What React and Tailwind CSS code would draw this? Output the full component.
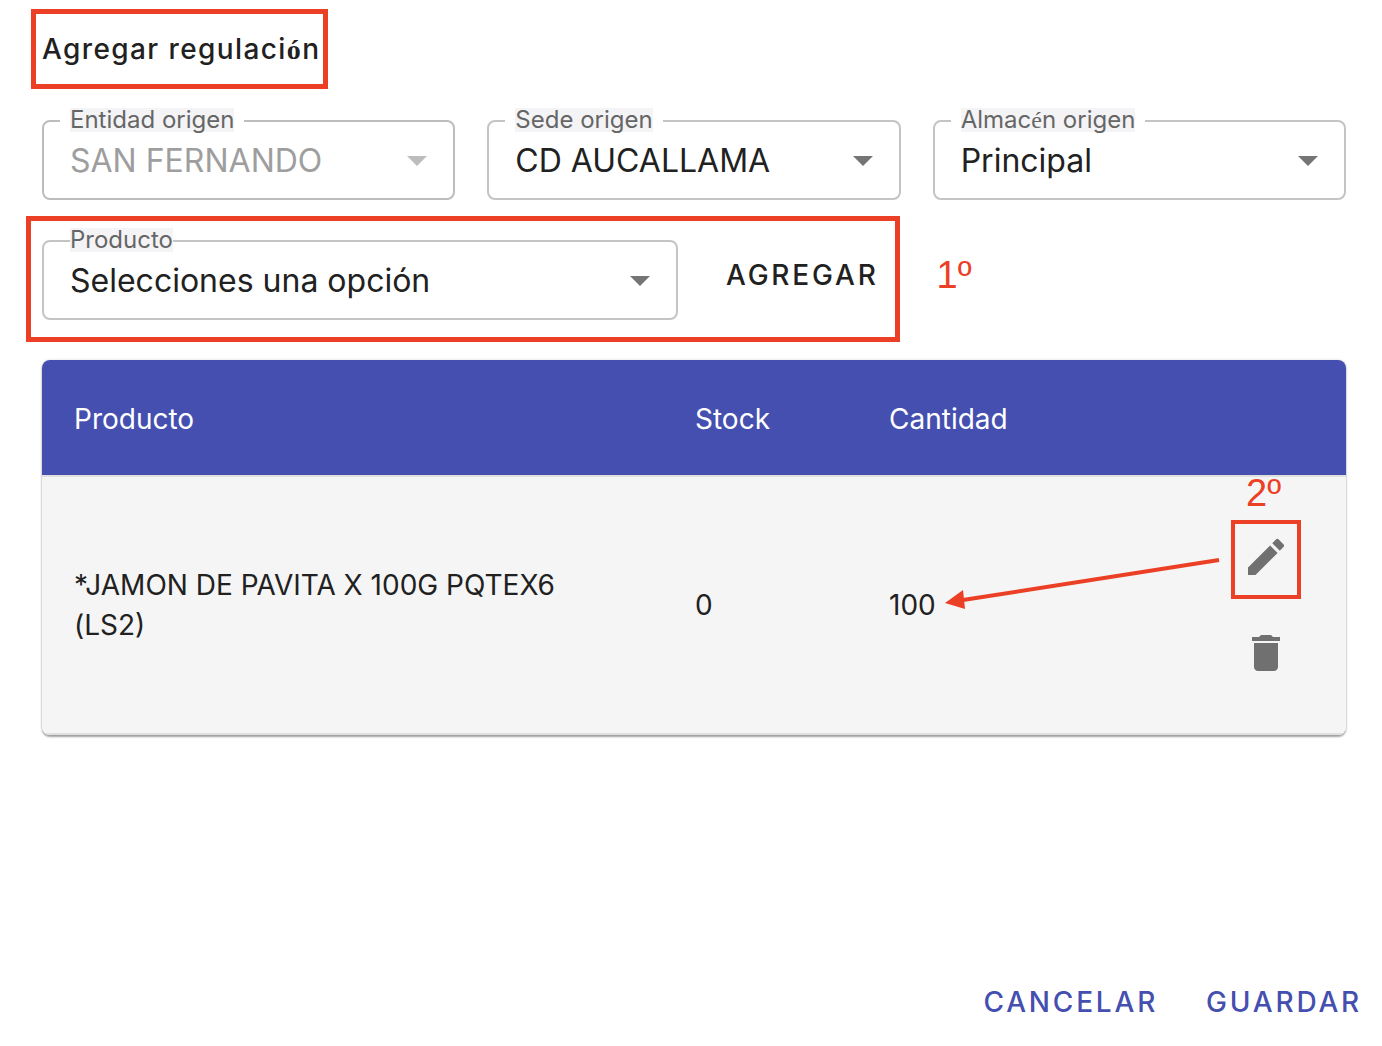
import React, { useState } from "react";
import { MdArrowDropDown, MdDelete, MdEdit } from "react-icons/md";

const products = [
  { id: 1, name: "*JAMON DE PAVITA X 100G PQTEX6 (LS2)", stock: 0, quantity: 100 },
];

const SelectField = ({ id, label, name, value, options, onChange, disabled, notched = true }) => (
  <div className="relative">
    <select
      id={id}
      name={name}
      value={value}
      onChange={onChange}
      disabled={disabled}
      className="block h-20 w-full appearance-none rounded-lg border-2 border-[#c4c4c4] bg-white pt-0.5 pr-16 pl-[26px] text-[32px] text-[#212121] disabled:border-[#bdbdbd] disabled:text-[#9e9e9e] disabled:opacity-100"
    >
      {options.map((option) => (
        <option key={option} value={option}>
          {option}
        </option>
      ))}
    </select>
    <label
      htmlFor={id}
      className={`absolute -top-3 text-2xl leading-6 text-[#666666] ${
        notched ? "left-[18px] bg-white px-[10px]" : "left-7"
      }`}
    >
      <span className="block bg-[#f4f4f6]">{label}</span>
    </label>
    <MdArrowDropDown
      size={48}
      className={`pointer-events-none absolute top-4 right-[14px] ${
        disabled ? "text-[#bdbdbd]" : "text-[#757575]"
      }`}
    />
  </div>
);

const App = () => {
  const [formData, setFormData] = useState({
    entity: "SAN FERNANDO",
    site: "CD AUCALLAMA",
    warehouse: "Principal",
    product: "Selecciones una opción",
  });

  const handleChange = (e) => {
    setFormData({ ...formData, [e.target.name]: e.target.value });
  };

  return (
    <form
      onSubmit={(e) => e.preventDefault()}
      className="flex min-h-screen flex-col bg-white font-['Inter','Liberation_Sans',sans-serif] text-[#212121]"
    >
      <div className="pr-9 pl-[42px]">
        <div className="flex h-[120px] items-start pt-7">
          <h2 className="relative text-[28px] leading-[42px] font-medium tracking-wider">
            Agregar regulaci<span className="font-['Liberation_Serif',serif] font-bold">ó</span>n
            <span className="pointer-events-none absolute -top-[19px] -right-2 -bottom-[18px] -left-[11px] border-5 border-[#eb4025]" />
          </h2>
        </div>

        <div className="grid grid-cols-3 gap-8">
          <SelectField
            id="entity"
            name="entity"
            label="Entidad origen"
            value={formData.entity}
            options={["SAN FERNANDO"]}
            onChange={handleChange}
            disabled
          />
          <SelectField
            id="site"
            name="site"
            label="Sede origen"
            value={formData.site}
            options={["CD AUCALLAMA"]}
            onChange={handleChange}
          />
          <SelectField
            id="warehouse"
            name="warehouse"
            label={
              <>
                Almac<span className="font-['Liberation_Serif',serif]">é</span>n origen
              </>
            }
            value={formData.warehouse}
            options={["Principal"]}
            onChange={handleChange}
          />
        </div>

        <div className="relative mt-10 grid grid-cols-2 gap-8">
          <SelectField
            id="product"
            name="product"
            label="Producto"
            value={formData.product}
            options={["Selecciones una opción"]}
            onChange={handleChange}
            notched={false}
          />
          <div className="flex items-start">
            <button type="button" className="h-[70px] px-4 text-[28px] font-medium tracking-widest">
              AGREGAR
            </button>
            <span className="ml-[42px] font-['Liberation_Sans',sans-serif] text-[38px] leading-[70px] text-[#eb4025]">
              1º
            </span>
          </div>
          <span className="pointer-events-none absolute -top-6 -left-4 h-[126px] w-[874px] border-5 border-[#eb4025]" />
        </div>

        <div className="relative mt-10 rounded-lg shadow-[0_2px_2px_rgba(0,0,0,0.35),0_0_3px_rgba(0,0,0,0.15)]">
          <table className="w-full table-fixed border-separate border-spacing-0 overflow-hidden rounded-lg bg-[#f5f5f5] text-left text-[28px] leading-10">
            <thead className="bg-[#444fb0] text-white">
              <tr>
                <th className="h-[117px] border-b-2 border-[#e0e0e0] px-8 pt-0.5 font-normal">Producto</th>
                <th className="w-[194px] border-b-2 border-[#e0e0e0] px-8 pt-0.5 font-normal">Stock</th>
                <th className="w-[329px] border-b-2 border-[#e0e0e0] px-8 pt-0.5 font-normal">Cantidad</th>
                <th className="w-40 border-b-2 border-[#e0e0e0]" />
              </tr>
            </thead>
            <tbody>
              {products.map((product) => (
                <tr key={product.id}>
                  <td className="border-b-2 border-[#e0e0e0] px-8">{product.name}</td>
                  <td className="border-b-2 border-[#e0e0e0] px-8">{product.stock}</td>
                  <td className="border-b-2 border-[#e0e0e0] px-8">{product.quantity}</td>
                  <td className="border-b-2 border-[#e0e0e0] p-8 text-[#707070]">
                    <div className="relative flex flex-col">
                      <button type="button" aria-label="Editar" className="size-24 p-6">
                        <MdEdit size={48} />
                      </button>
                      <button type="button" aria-label="Eliminar" className="size-24 p-6">
                        <MdDelete size={48} />
                      </button>
                      <span className="pointer-events-none absolute top-[11px] left-[13px] h-[79px] w-[70px] border-4 border-[#eb4025]" />
                      <span className="pointer-events-none absolute -top-9 left-7 font-['Liberation_Sans',sans-serif] text-[38px] text-[#eb4025]">
                        2º
                      </span>
                    </div>
                  </td>
                </tr>
              ))}
            </tbody>
          </table>
          <svg
            width="276"
            height="56"
            viewBox="0 0 276 56"
            className="pointer-events-none absolute top-[195px] right-[126px]"
          >
            <path d="M275 5 19 45" stroke="#eb4025" strokeWidth="4" fill="none" />
            <path d="M1 48 19 35 21 54Z" fill="#eb4025" />
          </svg>
        </div>
      </div>

      <div className="mt-auto flex justify-end gap-4 pr-1 pb-2 text-[28px] font-medium tracking-widest text-[#444fb0]">
        <button type="button" className="h-[72px] px-4">
          CANCELAR
        </button>
        <button type="submit" className="h-[72px] px-4">
          GUARDAR
        </button>
      </div>
    </form>
  );
};

export default App;
